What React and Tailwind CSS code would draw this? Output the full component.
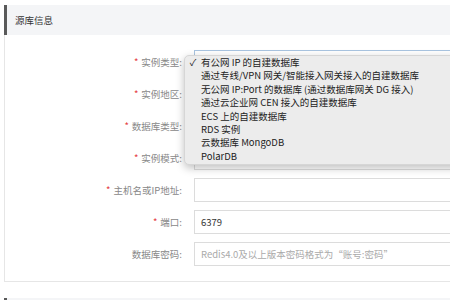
import React from "react";

const options = [
  "有公网 IP 的自建数据库",
  "通过专线/VPN 网关/智能接入网关接入的自建数据库",
  "无公网 IP:Port 的数据库 (通过数据库网关 DG 接入)",
  "通过云企业网 CEN 接入的自建数据库",
  "ECS 上的自建数据库",
  "RDS 实例",
  "云数据库 MongoDB",
  "PolarDB",
];

function Row({ label, required, children }) {
  return (
    <div className="flex items-center h-[24px]">
      <div className="w-[177px] text-right text-[9.5px] text-[#888] shrink-0">
        {required && <span className="text-[#e4393c] mr-[3px]">*</span>}
        {label}:
      </div>
      <div className="ml-[12px] flex-1 h-full">{children}</div>
    </div>
  );
}

function Box({ value, placeholder, focused }) {
  return (
    <div
      className={`h-full w-[300px] border bg-white flex items-center pl-[6px] text-[9.5px] ${
        focused ? "border-[#a9c4e0]" : "border-[#dcdcdc]"
      }`}
    >
      {value ? (
        <span className="text-[#333]">{value}</span>
      ) : (
        <span className="text-[#aaa]">{placeholder}</span>
      )}
    </div>
  );
}

export default function App() {
  return (
    <div
      className="relative w-[450px] h-[300px] overflow-hidden bg-white pt-[5px] pl-[4px]"
      style={{ fontFamily: '"Noto Sans CJK SC", "Noto Sans", sans-serif' }}
    >
      <div className="border-l border-b border-[#e6e6e6] h-[277px]">
        <div className="h-[30px] bg-[#f4f5f7] border-l-[3px] -ml-px border-[#5a5a5a] flex items-center pl-[8px] text-[9.5px] text-[#333]">
          源库信息
        </div>
        <div className="flex flex-col gap-[8px] pt-[15px]">
          <Row label="实例类型" required>
            <Box focused />
          </Row>
          <Row label="实例地区" required>
            <Box />
          </Row>
          <Row label="数据库类型" required>
            <Box />
          </Row>
          <Row label="实例模式" required>
            <Box />
          </Row>
          <Row label="主机名或IP地址" required>
            <Box />
          </Row>
          <Row label="端口" required>
            <Box value="6379" />
          </Row>
          <Row label="数据库密码">
            <Box placeholder={"Redis4.0及以上版本密码格式为\u201c账号:密码\u201d"} />
          </Row>
        </div>
      </div>
      <div className="mt-[16px] h-[20px] bg-[#f4f5f7] border-l-[3px] border-[#5a5a5a]" />

      <div className="absolute left-[184px] top-[55px] w-[290px] h-[110px] rounded-[5px] bg-[#ececec] shadow-[0_3px_8px_rgba(0,0,0,0.25)] border border-[#d6d6d6] text-[9.5px] text-[#222] leading-[13.4px]">
        {options.map((o, i) => (
          <div key={o} className="flex">
            <span className="w-[16px] text-center">{i === 0 ? "✓" : ""}</span>
            <span className="whitespace-pre">{o}</span>
          </div>
        ))}
      </div>
    </div>
  );
}
